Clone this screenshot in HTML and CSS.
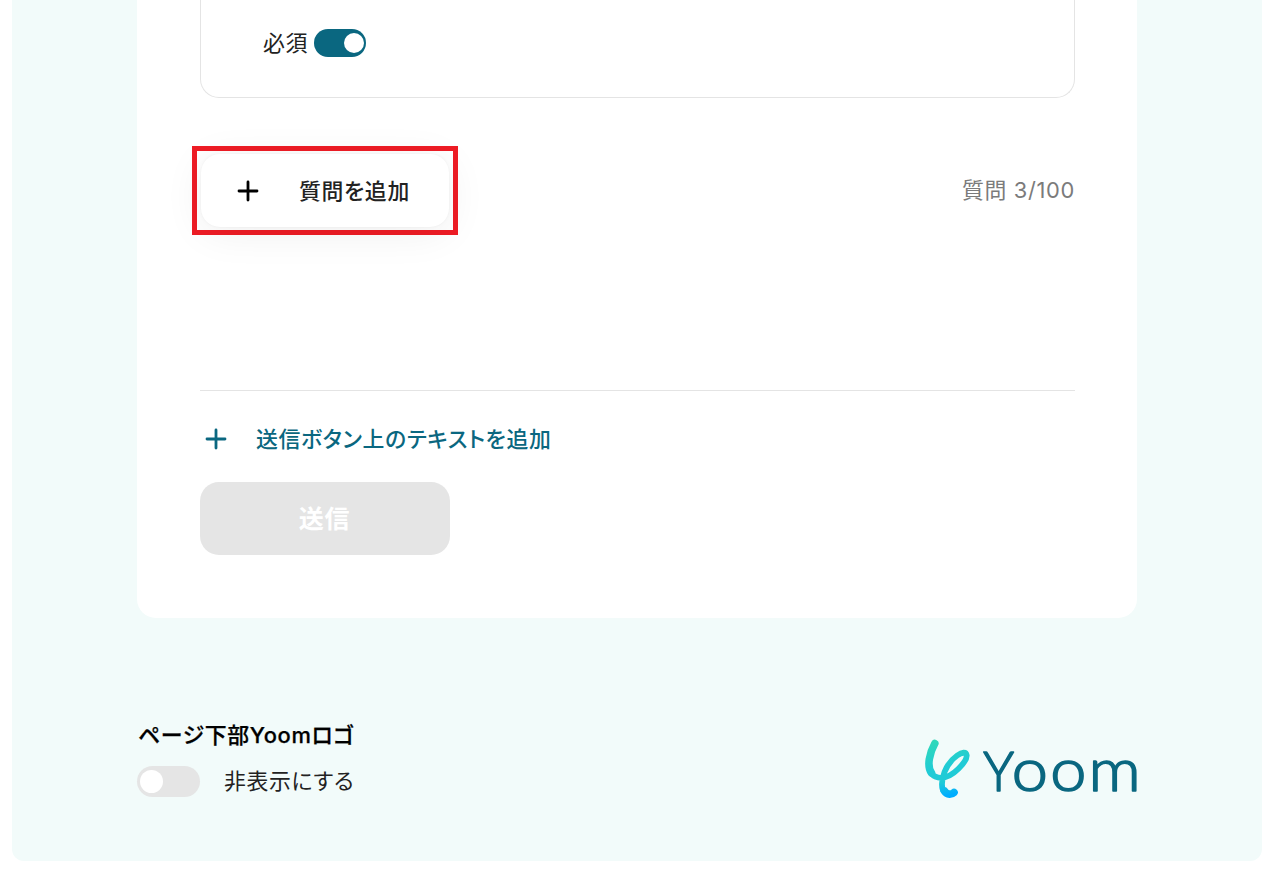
FILE: index.html
```html
<!DOCTYPE html>
<html lang="ja">
<head>
    <meta charset="UTF-8">
    <meta name="viewport" content="width=device-width, initial-scale=1.0">
    <title>フォーム編集</title>
    <link rel="stylesheet" href="styles.css">
</head>
<body>
    <div class="page">
        <main class="form-card">
            <section class="question-box">
                <span class="label">必須</span>
                <span class="toggle on"></span>
            </section>
            <div class="add-row">
                <div class="highlight">
                    <button class="add-button">
                        <svg class="plus" viewBox="0 0 22 22"><path d="M11 2v18M2 11h18"/></svg>
                        <span>質問を追加</span>
                    </button>
                </div>
                <span class="count">質問 3/100</span>
            </div>
            <section class="submit-area">
                <a class="text-add">
                    <svg class="plus" viewBox="0 0 22 22"><path d="M11 2v18M2 11h18"/></svg>
                    <span>送信ボタン上のテキストを追加</span>
                </a>
                <button class="submit-button">送信</button>
            </section>
        </main>
        <footer class="footer">
            <div class="logo-setting">
                <h2>ページ下部Yoomロゴ</h2>
                <div class="logo-toggle">
                    <span class="toggle large"></span>
                    <span class="label">非表示にする</span>
                </div>
            </div>
            <svg class="logo" viewBox="0 0 220 70">
                <defs>
                    <linearGradient id="mark" gradientUnits="userSpaceOnUse" x1="16" y1="9" x2="33" y2="68">
                        <stop offset="0" stop-color="#31d9b8"/>
                        <stop offset=".5" stop-color="#20cbd6"/>
                        <stop offset=".72" stop-color="#20cbd6"/>
                        <stop offset=".95" stop-color="#00adff"/>
                    </linearGradient>
                </defs>
                <g class="mark">
                    <path class="thick" d="M17.800 13.500C12.500 23 9.500 36 14.500 43"/>
                    <path d="M14.500 43.500C17 46.800 20 47.800 24 47.800C36 47.800 50 31 49.700 25.500C48.500 17.500 33 28 27.500 42C24.500 50 24 55 26 60.500"/>
                    <path class="thick" d="M27.500 61C30 65.300 35 64.500 37 62.500"/>
                </g>
                <g class="wordmark" text-anchor="middle">
                    <text class="cap" x="85.900" y="61" transform="scale(.95 1)">Y</text>
                    <text y="61" transform="scale(1.08 1)"><tspan x="104.400">o</tspan><tspan x="140.200">o</tspan><tspan x="182.900">m</tspan></text>
                </g>
            </svg>
        </footer>
    </div>
</body>
</html>
```
FILE: styles.css
```css
* {
    margin: 0;
    padding: 0;
    box-sizing: border-box;
}
body {
    font-family: Inter, "Noto Sans CJK JP", sans-serif;
    font-size: 21.875px;
    line-height: 32px;
    letter-spacing: 0.03em;
    font-feature-settings: "palt";
    color: #222;
    background: #fff;
}
button {
    font: inherit;
    font-feature-settings: inherit;
    letter-spacing: inherit;
    color: inherit;
    border: none;
}
.page {
    width: 1250px;
    height: 861px;
    margin-left: 12px;
    padding: 0 125px;
    background: #f2fbfa;
    border-radius: 0 0 12px 12px;
}
.form-card {
    height: 618px;
    padding: 0 62px 0 63px;
    background: #fff;
    border-radius: 0 0 19px 19px;
}
.question-box {
    display: flex;
    align-items: center;
    gap: 6px;
    height: 98px;
    padding: 0 62px 12px;
    border: 1px solid #e4e4e4;
    border-top: none;
    border-radius: 0 0 19px 19px;
}

/* スイッチ */
.toggle {
    display: flex;
    align-items: center;
    width: 52px;
    height: 28px;
    padding: 0 2.500px;
    border-radius: 16px;
    background: #e5e5e5;
}
.toggle::before {
    content: "";
    width: 20px;
    height: 20px;
    border-radius: 50%;
    background: #fff;
}
.toggle.on {
    justify-content: flex-end;
    background: #0a6780;
}
.toggle.large {
    width: 63px;
    height: 31px;
}
.toggle.large::before {
    width: 23px;
    height: 23px;
}

.plus {
    width: 22px;
    height: 22px;
    fill: none;
    stroke: currentColor;
    stroke-width: 2.800;
    stroke-linecap: round;
}

/* 質問の追加 */
.add-row {
    display: flex;
    justify-content: space-between;
    align-items: center;
    height: 89px;
    margin: 48px 0 155px -8px;
}
.highlight {
    width: 266px;
    height: 89px;
    padding: 3px 4px;
    border: 5px solid #ee1c25;
}
.add-button {
    display: flex;
    align-items: center;
    gap: 40px;
    width: 248px;
    height: 73px;
    padding-left: 36px;
    background: #fff;
    border-radius: 19px;
    font-weight: 500;
    box-shadow: 0 6px 40px rgba(0, 0, 0, 0.065), 0 0 3px rgba(0, 0, 0, 0.05);
}
.add-button .plus {
    color: #000;
}
.count {
    padding-bottom: 2px;
    color: #7b7b7b;
}

/* 送信 */
.submit-area {
    border-top: 1px solid #e4e4e4;
    padding-top: 32px;
}
.text-add {
    display: flex;
    align-items: center;
    gap: 29px;
    padding-left: 5px;
    color: #0a6780;
    font-weight: 500;
}
.submit-button {
    display: block;
    width: 250px;
    height: 73px;
    margin-top: 27px;
    padding-right: 1px;
    background: #e5e5e5;
    border-radius: 19px;
    color: #fff;
    font-size: 25px;
    font-weight: 700;
}

/* フッター */
.footer {
    display: flex;
    justify-content: space-between;
    padding-top: 101px;
}
.footer h2 {
    padding-left: 1px;
    font-size: inherit;
    font-weight: 500;
    color: #000;
    -webkit-text-stroke: 0.25px #000;
}
.logo-toggle {
    display: flex;
    align-items: center;
    gap: 24px;
    margin-top: 14px;
}
.logo {
    width: 220px;
    height: 70px;
    margin-top: 11px;
    overflow: visible;
}
.mark {
    fill: none;
    stroke: url(#mark);
    stroke-width: 5.800;
    stroke-linecap: round;
}
.mark .thick {
    stroke-width: 7.600;
}
.wordmark {
    fill: #0a6780;
    stroke: #0a6780;
    stroke-width: 1.600;
    stroke-linejoin: round;
    font-family: Lato, sans-serif;
    font-size: 60px;
    font-weight: 300;
    letter-spacing: 0;
}
.wordmark .cap {
    font-size: 54.500px;
}
```
